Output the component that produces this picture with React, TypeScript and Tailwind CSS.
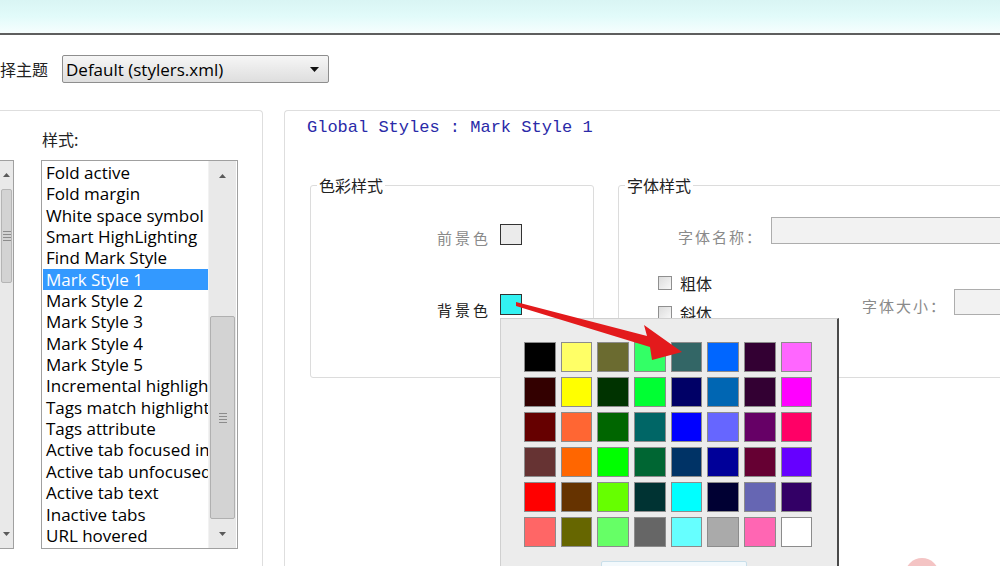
import React from "react";

const styles = [
  "Fold active",
  "Fold margin",
  "White space symbol",
  "Smart HighLighting",
  "Find Mark Style",
  "Mark Style 1",
  "Mark Style 2",
  "Mark Style 3",
  "Mark Style 4",
  "Mark Style 5",
  "Incremental highlight all",
  "Tags match highlighting",
  "Tags attribute",
  "Active tab focused indicator",
  "Active tab unfocused indicator",
  "Active tab text",
  "Inactive tabs",
  "URL hovered",
];

const palette = [
  ["#000000", "#ffff66", "#6b6b30", "#33ff66", "#336666", "#0066ff", "#330033", "#ff66ff"],
  ["#330000", "#ffff00", "#003300", "#00ff33", "#000066", "#0066b3", "#330033", "#ff00ff"],
  ["#660000", "#ff6633", "#006600", "#006666", "#0000ff", "#6666ff", "#660066", "#ff0066"],
  ["#663333", "#ff6600", "#00ff00", "#006633", "#003366", "#000099", "#660033", "#6600ff"],
  ["#ff0000", "#663300", "#66ff00", "#003333", "#00ffff", "#000033", "#6666b3", "#330066"],
  ["#ff6666", "#666600", "#66ff66", "#666666", "#66ffff", "#aaaaaa", "#ff66b3", "#ffffff"],
];

const cjk = { fontFamily: '"Noto Sans CJK SC", "Noto Sans", sans-serif' };

const ScrollArrow = ({ down }: { down?: boolean }) => (
  <svg width="9" height="6" viewBox="0 0 9 6" className="mx-auto">
    <path d={down ? "M1 1 L8 1 L4.5 5 Z" : "M1 5 L8 5 L4.5 1 Z"} fill="#5a5a5a" />
  </svg>
);

const Grip = () => (
  <div className="flex flex-col gap-[2px] items-center">
    <div className="w-[8px] h-[1px] bg-[#8c8c8c]" />
    <div className="w-[8px] h-[1px] bg-[#8c8c8c]" />
    <div className="w-[8px] h-[1px] bg-[#8c8c8c]" />
    <div className="w-[8px] h-[1px] bg-[#8c8c8c]" />
  </div>
);

const Check = ({ label }: { label: string }) => (
  <div className="flex items-center gap-[8px] h-[24px] whitespace-nowrap">
    <div className="shrink-0 w-[14px] h-[14px] border border-[#8f8f8f] bg-gradient-to-br from-[#dcdcdc] to-[#f8f8f8]" />
    <span className="text-[16px] text-[#222]" style={cjk}>
      {label}
    </span>
  </div>
);

export default function App() {
  return (
    <div
      className="relative w-[1000px] h-[566px] overflow-hidden bg-white"
      style={{ fontFamily: '"Open Sans", "Noto Sans CJK SC", sans-serif' }}
    >
      {/* title bar strip */}
      <div className="h-[33px] bg-gradient-to-b from-[#d9f5f4] via-[#e2fbfa] to-[#f6fefe]" />
      <div className="h-[2px] bg-[#5e5e5e]" />

      {/* theme row */}
      <div className="flex items-center h-[28px] mt-[20px]">
        <span className="text-[16px] text-[#222] w-[62px] shrink-0" style={cjk}>
          择主题
        </span>
        <div className="flex items-center w-[267px] h-[28px] border border-[#8e8e8e] rounded-[2px] bg-gradient-to-b from-[#f6f6f6] to-[#dedede] pl-[3px] pr-[9px]">
          <span className="text-[17px] text-black flex-1 leading-none">Default (stylers.xml)</span>
          <svg width="9" height="5" viewBox="0 0 9 5">
            <path d="M0 0 L9 0 L4.5 5 Z" fill="#111" />
          </svg>
        </div>
      </div>

      {/* main area */}
      <div className="flex mt-[27px]">
        {/* left panel */}
        <div className="shrink-0 w-[263px] h-[460px] border-t border-r border-[#dedede] rounded-tr-[4px]">
          <div className="pl-[42px] pt-[16px] h-[49px] text-[16px] text-[#222]" style={cjk}>
            样式:
          </div>
          <div className="flex">
            {/* clipped language list */}
            <div className="shrink-0 w-[14px] h-[389px] border-y border-r border-[#a0a0a0] flex">
              <div className="w-[13px] bg-[#e9e9e9] flex flex-col">
                <div className="h-[28px] flex items-center">
                  <ScrollArrow />
                </div>
                <div className="h-[94px] mx-[1px] bg-[#d3d3d3] border border-[#b5b5b5] rounded-[2px] flex items-center justify-center">
                  <Grip />
                </div>
                <div className="flex-1" />
                <div className="h-[28px] flex items-center">
                  <ScrollArrow down />
                </div>
              </div>
            </div>

            {/* style listbox */}
            <div className="shrink-0 ml-[27px] w-[197px] h-[389px] border border-[#a0a0a0] flex">
              <div className="w-[166px] overflow-hidden pl-[1px] pt-[1px]">
                {styles.map((s) => (
                  <div
                    key={s}
                    className={
                      "h-[21.35px] leading-[21.35px] text-[17px] whitespace-nowrap pl-[3px] " +
                      (s === "Mark Style 1" ? "bg-[#3399ff] text-white" : "text-black")
                    }
                  >
                    {s}
                  </div>
                ))}
              </div>
              <div className="w-[28px] bg-[#e9e9e9] flex flex-col border-l border-[#f2f2f2]">
                <div className="h-[30px] flex items-center">
                  <ScrollArrow />
                </div>
                <div className="h-[125px]" />
                <div className="h-[203px] mx-[1px] bg-[#d3d3d3] border border-[#b0b0b0] rounded-[2px] flex items-center justify-center">
                  <Grip />
                </div>
                <div className="flex-1 flex items-center">
                  <ScrollArrow down />
                </div>
              </div>
            </div>
          </div>
        </div>

        {/* right panel */}
        <div className="ml-[21px] flex-1 min-w-0 h-[460px] border-t border-l border-[#dedede] rounded-tl-[4px] pl-[22px] pt-[7px]">
          <div
            className="text-[17px] leading-[20px] text-[#2a2aa8] whitespace-nowrap"
            style={{ fontFamily: '"Liberation Mono", "DejaVu Sans Mono", monospace' }}
          >
            Global Styles : Mark Style 1
          </div>

          <div className="flex mt-[38px] w-[760px]">
            {/* color style */}
            <fieldset className="shrink-0 ml-[3px] w-[284px] h-[202px] border border-[#dcdcdc] rounded-[3px]">
              <legend className="ml-[6px] px-[2px] text-[16px] leading-[18px] text-[#222]" style={cjk}>
                色彩样式
              </legend>
              <div className="flex flex-col items-end pr-[71px] pt-[30px] gap-[49px]" style={cjk}>
                <div className="flex items-end gap-[9px]">
                  <span className="text-[15px] leading-[20px] tracking-[3px] text-[#8a8a8a] -mb-[3px]">前景色</span>
                  <div className="w-[22px] h-[21px] border border-[#333] bg-[#ebebeb]" />
                </div>
                <div className="flex items-end gap-[9px]">
                  <span className="text-[15px] leading-[20px] tracking-[3px] text-[#222] -mb-[5px]">背景色</span>
                  <div className="w-[22px] h-[21px] border border-[#333] bg-[#33f2f2]" />
                </div>
              </div>
            </fieldset>

            {/* font style */}
            <fieldset className="shrink-0 ml-[24px] w-[420px] h-[202px] border border-[#dcdcdc] rounded-[3px]">
              <legend className="ml-[6px] px-[2px] text-[16px] leading-[18px] text-[#222]" style={cjk}>
                字体样式
              </legend>
              <div className="flex items-end pl-[59px] pt-[23px]" style={cjk}>
                <span className="shrink-0 text-[15px] leading-[20px] tracking-[2px] text-[#8a8a8a] w-[93px] -mb-[3px]">字体名称：</span>
                <div className="shrink-0 w-[260px] h-[27px] border border-[#adadad] bg-[#f2f2f2]" />
              </div>
              <div className="flex items-start pt-[27px]">
                <div className="shrink-0 w-[90px] pl-[39px] flex flex-col">
                  <Check label="粗体" />
                  <div className="h-[6px]" />
                  <Check label="斜体" />
                </div>
                <div className="flex items-end pl-[153px] pt-[18px]" style={cjk}>
                  <span className="shrink-0 text-[15px] leading-[20px] tracking-[2px] text-[#8a8a8a] w-[92px] -mb-[1px]">字体大小：</span>
                  <div className="shrink-0 w-[80px] h-[26px] border border-[#adadad] bg-[#f2f2f2]" />
                </div>
              </div>
            </fieldset>
          </div>
        </div>
      </div>

      {/* colour picker popup */}
      <div className="absolute left-[500px] top-[318px] w-[339px] h-[260px] bg-[#ececec] border-l border-t border-[#d0d0d0] border-r-2 border-r-[#4a4a4a] pl-[23px] pt-[23px]">
        <div className="grid grid-cols-[repeat(8,31.5px)] gap-x-[5.2px] gap-y-[5.6px]">
          {palette.flat().map((c, i) => (
            <div
              key={i}
              className="h-[29.5px] border border-[#8c8c8c]"
              style={{ backgroundColor: c }}
            />
          ))}
        </div>
        <div className="ml-[77px] mt-[14px] w-[146px] h-[10px] border border-[#c9dfea] bg-[#f3f9fc] rounded-[2px]" />
      </div>

      {/* red arrow annotation */}
      <svg className="absolute left-0 top-0 pointer-events-none" width="1000" height="566">
        <polygon
          points="516,302 647,336 644,325 682,352 652,360 650,347 516,306"
          fill="#e31a1c"
        />
      </svg>

      {/* faint watermark */}
      <div className="absolute left-[905px] top-[558px] w-[34px] h-[34px] rounded-full bg-[#f4c4c4]" />
    </div>
  );
}
